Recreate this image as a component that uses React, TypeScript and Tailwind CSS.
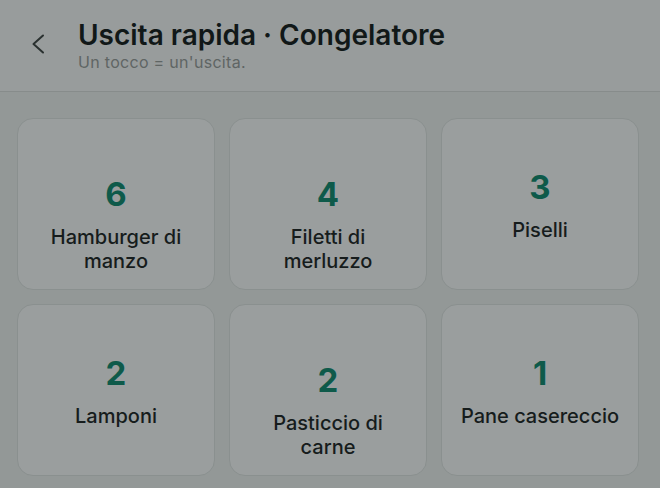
type Item = { name: string; qty: number; twoLines?: boolean }

const ITEMS: Item[] = [
  { name: "Hamburger di manzo", qty: 6, twoLines: true },
  { name: "Filetti di merluzzo", qty: 4, twoLines: true },
  { name: "Piselli", qty: 3 },
  { name: "Lamponi", qty: 2 },
  { name: "Pasticcio di carne", qty: 2, twoLines: true },
  { name: "Pane casereccio", qty: 1 },
]

export default function App() {
  return (
    <div
      className="h-[488px] w-[660px] overflow-hidden bg-[#939897]"
      style={{ fontFamily: "Inter, 'Noto Sans', sans-serif" }}
    >
      {/* Header */}
      <div className="flex h-[92px] items-start border-b border-[#878c8b] bg-[#989c9c] pt-[18px]">
        <button className="ml-[30px] mt-[16px] flex h-5 w-4 items-center justify-center text-[#2a3130]">
          <svg width="16" height="20" viewBox="0 0 16 20" fill="none">
            <polyline points="13,1.5 3.5,10 13,18.5" stroke="currentColor" strokeWidth="2" strokeLinecap="round" strokeLinejoin="round" />
          </svg>
        </button>
        <div className="ml-[32px]">
          <h1 className="text-[28px] leading-[34px] font-semibold text-[#111818]">
            Uscita rapida · Congelatore
          </h1>
          <p className="mt-[1px] text-[16px] leading-[18px] tracking-[0.3px] text-[#5f6564]">Un tocco = un'uscita.</p>
        </div>
      </div>

      {/* Grid */}
      <div className="grid grid-cols-3 gap-[14px] pl-[17px] pr-[21px] pt-[26px]">
        {ITEMS.map((item) => (
          <button
            key={item.name}
            className={`flex h-[172px] flex-col items-center justify-center rounded-[16px] border border-[#8a908f] bg-[#9a9e9e] px-4 ${
              item.twoLines ? "pt-[14px]" : ""
            }`}
          >
            <span className="text-[33px] leading-[40px] font-bold text-[#0e5a4a]">{item.qty}</span>
            <span className="mt-[11px] h-6 max-w-[164px] text-[20px] leading-[24px] font-medium text-[#161c1c]">
              {item.name}
            </span>
          </button>
        ))}
      </div>
    </div>
  )
}
